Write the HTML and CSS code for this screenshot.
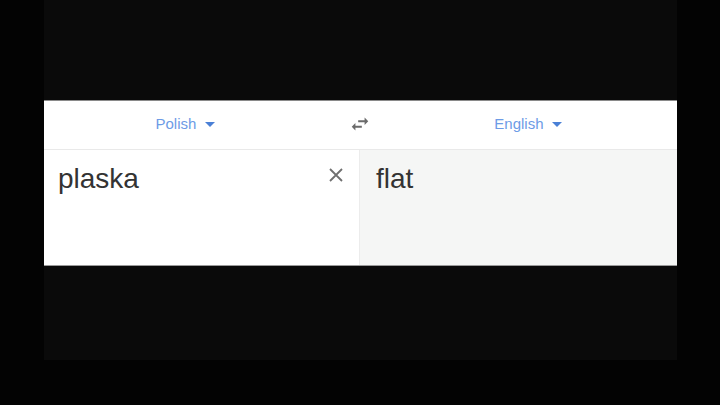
FILE: index.html
```html
<!DOCTYPE html>
<html lang="en">
<head>
    <meta charset="UTF-8">
    <meta name="viewport" content="width=device-width, initial-scale=1.0">
    <title>Translate</title>
    <link rel="stylesheet" href="styles.css">
</head>
<body>
    <div class="screen">
        <div class="translator">
            <div class="lang-bar">
                <div class="lang source">Polish <span class="caret"></span></div>
                <div class="swap">
                    <svg width="22" height="22" viewBox="0 0 24 24">
                        <path d="M6.99 11L3 15l3.99 4v-3H14v-2H6.99v-3zM21 9l-4-4v3h-7v2h7v3l4-4z" fill="#6b6b6b"/>
                    </svg>
                </div>
                <div class="lang target">English <span class="caret"></span></div>
            </div>
            <div class="panes">
                <div class="pane input">
                    <span class="word">plaska</span>
                    <svg class="clear" width="14" height="14" viewBox="0 0 14 14">
                        <path d="M1 1L13 13M13 1L1 13" stroke="#6f6f6f" stroke-width="1.8"/>
                    </svg>
                </div>
                <div class="pane output">
                    <span class="word">flat</span>
                </div>
            </div>
        </div>
    </div>
</body>
</html>
```

FILE: styles.css
```css
body {
    margin: 0;
    padding: 0;
    height: 405px;
    background-color: #030303;
    font-family: "Liberation Sans", Arial, sans-serif;
    overflow: hidden;
}

.screen {
    width: 633px;
    height: 260px;
    margin-left: 44px;
    padding-top: 100px;
    background-color: #0a0a0a;
}

.translator {
    background-color: #fff;
    border-top: 1px solid #8a8a8a;
    border-bottom: 1px solid #9a9a9a;
}

.lang-bar {
    display: flex;
    align-items: center;
    height: 48px;
    border-bottom: 1px solid #e9e9e9;
}

.lang {
    font-size: 15px;
    color: #6d9be6;
    text-align: center;
    padding-bottom: 4px;
}

.lang.source {
    width: 282px;
}

.swap {
    width: 68px;
    display: flex;
    justify-content: center;
    padding-bottom: 2px;
}

.lang.target {
    width: 268px;
}

.caret {
    display: inline-block;
    width: 0;
    height: 0;
    margin-left: 4px;
    vertical-align: middle;
    border-left: 5px solid transparent;
    border-right: 5px solid transparent;
    border-top: 5px solid #4a80d6;
}

.panes {
    display: flex;
    height: 115px;
}

.pane {
    display: flex;
    align-items: flex-start;
    justify-content: space-between;
    padding-top: 13px;
    box-sizing: border-box;
}

.pane.input {
    width: 316px;
    padding-left: 14px;
    padding-right: 16px;
    border-right: 1px solid #ececec;
}

.pane.output {
    flex: 1;
    padding-left: 16px;
    background-color: #f5f6f5;
}

.word {
    font-size: 28px;
    line-height: 32px;
    color: #333;
}

.clear {
    margin-top: 5px;
}
```
